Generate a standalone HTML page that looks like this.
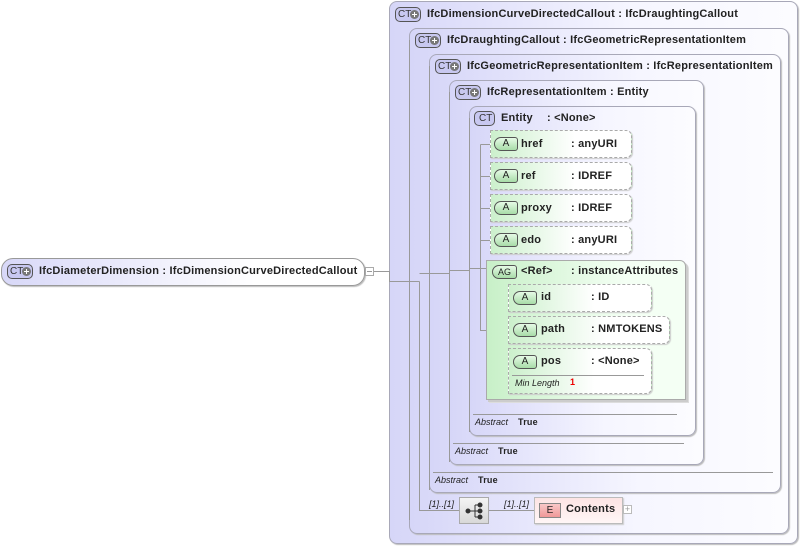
<!DOCTYPE html>
<html><head><meta charset="utf-8"><style>
*{box-sizing:border-box;margin:0;padding:0}
body{width:801px;height:546px;background:#fff;position:relative;overflow:hidden;font-family:"Liberation Sans",sans-serif;font-size:11px;font-weight:bold;color:#222}
.b{position:absolute;border:1px solid #a8a8b8;border-radius:8px;background:linear-gradient(to right,#d6d6f8,#f6f6ff 60%,#fcfcff);box-shadow:1px 1px 1px #bbb}
.t{position:absolute;white-space:nowrap;letter-spacing:0.2px}
.ct{position:absolute;width:26px;height:15px;border:1px solid #555;border-radius:5px;background:#c8c8f0;font-size:10px;font-weight:normal;line-height:13px;padding-left:2px;color:#333;letter-spacing:0}
.ct i{position:absolute;right:1px;top:2px;width:9px;height:9px;border-radius:50%;background:#777;}
.ct i:before{content:"";position:absolute;left:2px;top:4px;width:5px;height:1px;background:#fff}
.ct i:after{content:"";position:absolute;left:4px;top:2px;width:1px;height:5px;background:#fff}
.a{position:absolute;border:1px dashed #aaa;border-radius:0 6px 6px 0;background:linear-gradient(to right,#ccf0cc,#fff 60%);box-shadow:1px 1px 1px #ccc}
.ab{position:absolute;width:24px;height:14px;border:1px solid #555;border-radius:7px 3px 3px 7px;background:linear-gradient(#e6fae6,#a8dca8);font-size:10px;font-weight:normal;text-align:center;line-height:12px;color:#222}
.ln{position:absolute;height:1px;background:#999}
.sm{font-size:9px;font-style:italic;font-weight:normal;letter-spacing:0}
</style></head><body>
<div class="b" style="left:389px;top:1px;width:409px;height:543px"></div>
<div class="b" style="left:409px;top:28px;width:380px;height:506px"></div>
<div class="b" style="left:429px;top:54px;width:352px;height:439px"></div>
<div class="b" style="left:449px;top:80px;width:255px;height:385px"></div>
<div class="b" style="left:469px;top:106px;width:227px;height:330px"></div>

<div class="ct" style="left:395px;top:7px">CT<i></i></div><div class="t" style="left:427px;top:8px">IfcDimensionCurveDirectedCallout : IfcDraughtingCallout</div>
<div class="ct" style="left:415px;top:33px">CT<i></i></div><div class="t" style="left:447px;top:34px">IfcDraughtingCallout : IfcGeometricRepresentationItem</div>
<div class="ct" style="left:435px;top:59px">CT<i></i></div><div class="t" style="left:467px;top:60px">IfcGeometricRepresentationItem : IfcRepresentationItem</div>
<div class="ct" style="left:455px;top:85px">CT<i></i></div><div class="t" style="left:487px;top:86px">IfcRepresentationItem : Entity</div>
<div class="ct" style="left:474px;top:111px;width:21px;padding-left:4px">CT</div><div class="t" style="left:501px;top:112px">Entity</div><div class="t" style="left:547px;top:112px">: &lt;None&gt;</div>

<svg style="position:absolute;left:0;top:0" width="801" height="546"><g stroke="#999" fill="none" stroke-width="1">
<path d="M373.5 271.5H389.5V281.5H419.5M419.5 273.5H449.5V270.5H469.5M469.5 268.5H486.5"/>
<path d="M409.5 40V520M419.5 281.5V510.5H459M429.5 66V490M449.5 92V462M469.5 118V432"/>
<path d="M480.5 144.5V238.5M480.5 144.5H490M480.5 176.5H490M480.5 208.5H490M480.5 240.5H490M480.5 238.5V330.5H508"/>
<path d="M498.5 298.5V362.5M498.5 298.5H508M498.5 362.5H508"/>
<path d="M489 510.5H534"/>
</g></svg>

<div class="a" style="left:490px;top:130px;width:142px;height:28px"></div><div class="ab" style="left:494px;top:137px">A</div><div class="t" style="left:521px;top:138px">href</div><div class="t" style="left:571px;top:138px">: anyURI</div>
<div class="a" style="left:490px;top:162px;width:142px;height:28px"></div><div class="ab" style="left:494px;top:169px">A</div><div class="t" style="left:521px;top:170px">ref</div><div class="t" style="left:571px;top:170px">: IDREF</div>
<div class="a" style="left:490px;top:194px;width:142px;height:28px"></div><div class="ab" style="left:494px;top:201px">A</div><div class="t" style="left:521px;top:202px">proxy</div><div class="t" style="left:571px;top:202px">: IDREF</div>
<div class="a" style="left:490px;top:226px;width:142px;height:28px"></div><div class="ab" style="left:494px;top:233px">A</div><div class="t" style="left:521px;top:234px">edo</div><div class="t" style="left:571px;top:234px">: anyURI</div>

<div style="position:absolute;left:486px;top:260px;width:200px;height:140px;border:1px solid #aaa;border-radius:0 6px 0 0;background:linear-gradient(to right,#c8f0c8,#f4fff4 70%);box-shadow:2px 2px 0 #ccc,3px 3px 0 #ddd"></div>
<div class="ab" style="left:492px;top:265px;width:25px;font-size:9px">AG</div><div class="t" style="left:521px;top:265px">&lt;Ref&gt;</div><div class="t" style="left:571px;top:265px">: instanceAttributes</div>
<div class="a" style="left:508px;top:284px;width:144px;height:28px"></div><div class="ab" style="left:513px;top:291px">A</div><div class="t" style="left:541px;top:291px">id</div><div class="t" style="left:591px;top:291px">: ID</div>
<div class="a" style="left:508px;top:316px;width:162px;height:28px"></div><div class="ab" style="left:513px;top:323px">A</div><div class="t" style="left:541px;top:323px">path</div><div class="t" style="left:591px;top:323px">: NMTOKENS</div>
<div class="a" style="left:508px;top:348px;width:144px;height:46px"></div><div class="ab" style="left:513px;top:355px">A</div><div class="t" style="left:541px;top:355px">pos</div><div class="t" style="left:591px;top:355px">: &lt;None&gt;</div>
<div class="ln" style="left:512px;top:375px;width:132px"></div>
<div class="t sm" style="left:515px;top:378px">Min Length</div><div class="t" style="left:570px;top:377px;color:#e00;font-size:9px">1</div>

<div class="ln" style="left:473px;top:414px;width:204px"></div><div class="t sm" style="left:475px;top:417px">Abstract</div><div class="t" style="left:518px;top:417px;font-size:9px">True</div>
<div class="ln" style="left:453px;top:443px;width:231px"></div><div class="t sm" style="left:455px;top:446px">Abstract</div><div class="t" style="left:498px;top:446px;font-size:9px">True</div>
<div class="ln" style="left:433px;top:472px;width:340px"></div><div class="t sm" style="left:435px;top:475px">Abstract</div><div class="t" style="left:478px;top:475px;font-size:9px">True</div>

<div class="t sm" style="left:429px;top:499px">[1]..[1]</div>
<div style="position:absolute;left:459px;top:497px;width:30px;height:27px;border:1px solid #aaa;background:linear-gradient(#f4f4f4,#d8d8d8)"></div>
<svg style="position:absolute;left:459px;top:497px" width="30" height="27"><g fill="#333" stroke="#333"><circle cx="9" cy="14" r="2"/><circle cx="21" cy="8" r="2"/><circle cx="21" cy="14" r="2"/><circle cx="21" cy="20" r="2"/><path d="M9 14H16M16 8V20M16 8H21M16 20H21M16 14H21" fill="none"/></g></svg>
<div class="t sm" style="left:504px;top:499px">[1]..[1]</div>
<div style="position:absolute;left:534px;top:497px;width:89px;height:27px;border:1px solid #bbb;background:linear-gradient(#fde4e4,#fff6f6);box-shadow:1px 1px 1px #ccc"></div>
<div style="position:absolute;left:539px;top:503px;width:22px;height:15px;border:1px solid #888;background:linear-gradient(#f8c8c8,#f09898);font-size:10px;font-weight:normal;text-align:center;line-height:13px">E</div>
<div class="t" style="left:566px;top:503px;font-size:11px">Contents</div>
<div style="position:absolute;left:623px;top:505px;width:9px;height:9px;border:1px solid #bbb;background:#fff;font-size:9px;line-height:7px;text-align:center;color:#999;font-weight:normal">+</div>

<div style="position:absolute;left:1px;top:258px;width:364px;height:28px;border:1px solid #999;border-radius:12px;background:linear-gradient(to right,#d8d8f8,#fff 70%);box-shadow:1px 1px 1px #bbb"></div>
<div class="ct" style="left:7px;top:264px">CT<i></i></div><div class="t" style="left:39px;top:265px">IfcDiameterDimension : IfcDimensionCurveDirectedCallout</div>
<div style="position:absolute;left:365px;top:267px;width:9px;height:9px;border:1px solid #aaa;background:#fff"><div style="position:absolute;left:1px;top:3px;width:5px;height:1px;background:#999"></div></div>
</body></html>
